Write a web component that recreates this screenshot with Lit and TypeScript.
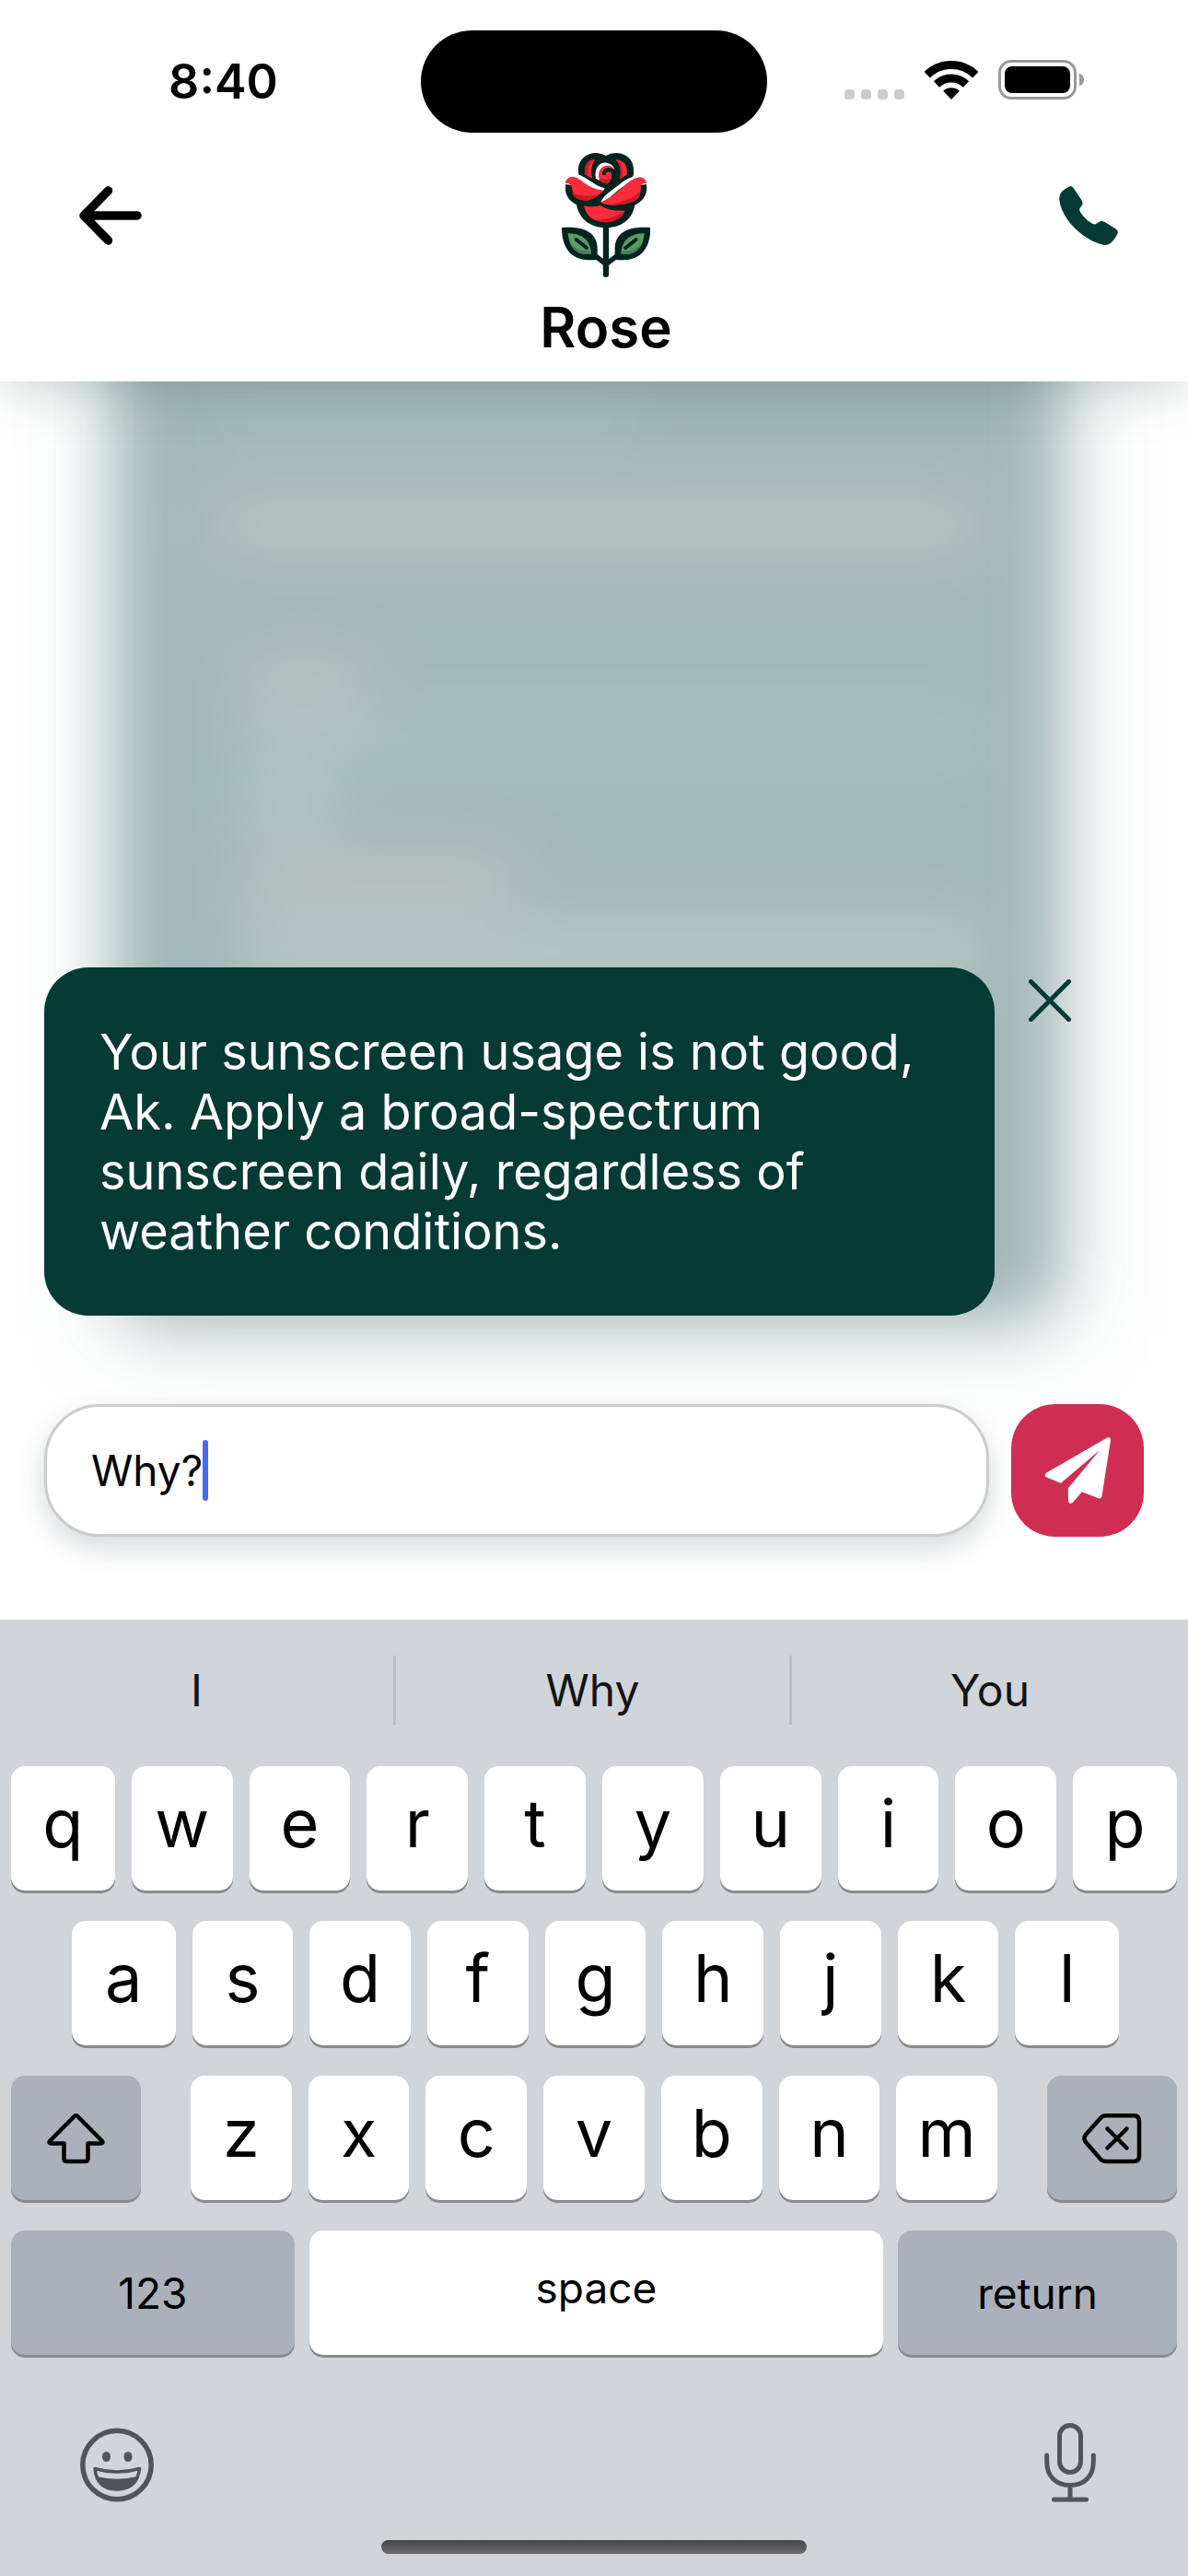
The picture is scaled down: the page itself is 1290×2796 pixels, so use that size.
import { LitElement, html, css, svg, nothing } from "lit";
import { customElement, property } from "lit/decorators.js";

const backIcon = svg`<svg width="68" height="64" viewBox="0 0 68 64" fill="none" stroke="#000" stroke-width="9.5" stroke-linecap="round" stroke-linejoin="round" aria-hidden="true">
  <path d="M31.5 5 5 32l26.500 27M5 32h58"/></svg>`;

const phoneIcon = svg`<svg width="64" height="64" viewBox="90 96 192 192" fill="#063a35" aria-hidden="true">
  <path d="M128 96Q133 97 137 102L163 141Q169 151 165 158L158 167Q155 172 158 178C168 196 184 211 200 219Q207 222 212 218L221 212Q229 208 239 213L273 234Q284 241 281 250Q274 266 261 279Q250 290 235 287C170 274 98 205 91 142Q89 125 99 114Q110 103 128 96Z"/></svg>`;

const wifiIcon = svg`<svg width="58" height="42" viewBox="0 0 58 42" aria-hidden="true">
  <g fill="none" stroke="#000" stroke-width="9">
    <path d="M2.700 15.200A37.500 37.500 0 0 1 55.300 15.200"/>
    <path d="M13 25.500A23 23 0 0 1 45 25.500"/>
  </g>
  <path d="M20.200 32.800A13 13 0 0 1 37.800 32.800L29 42Z"/></svg>`;

const batteryIcon = svg`<svg width="94" height="43" viewBox="0 0 94 43" aria-hidden="true">
  <rect x="1.500" y="1.500" width="82" height="40" rx="12.500" fill="none" stroke="#999" stroke-width="3"/>
  <rect x="7" y="7" width="71" height="29" rx="8" fill="#000"/>
  <path d="M88 14.500Q93 16.500 93 21.500T88 28.500Z" fill="#999"/></svg>`;

const leaf = svg`
  <path d="M91 291C150 287 203 298 207 355V378L235 400V420L203 396C150 402 91 385 91 291Z" fill="#04231f"/>
  <path d="M111 310C150 310 184 325 187 376C150 385 116 366 111 310Z" fill="#5a9b69"/>
  <path d="M121 346C140 366 165 368 187 368V377C160 382 135 372 121 346Z" fill="#447f57"/>
  <path d="M138 330 172 357" stroke="#04231f" stroke-width="12" stroke-linecap="round"/>`;

const roseLogo = svg`<svg width="96" height="135" viewBox="91 48 288 405" role="img" aria-label="Rose">
  ${leaf}<g transform="matrix(-1 0 0 1 471 0)">${leaf}</g>
  <path d="M235 280V443" stroke="#04231f" stroke-width="19" stroke-linecap="round"/>
  <path d="M146 119C138 72 170 48 204 48Q222 49 235 57Q250 48 268 48C308 50 330 76 325 119L300 160 236 215 170 160Z" fill="#04231f"/>
  <path d="M104 150Q96 194 139 217C148 268 190 292 236 292C282 290 320 268 329 218Q374 196 367 150L300 160 236 185 170 160Z" fill="#04231f"/>
  <path d="M163 220Q195 226 217 218Q240 238 297 236C285 262 260 274 232 274C195 272 170 255 163 220Z" fill="#ff2a3c"/>
  <path d="M203 268Q262 262 297 236C285 268 240 282 203 268Z" fill="#c81a25"/>
  <path d="M167 119C163 92 175 68 200 69C188 85 185 105 190 131Q175 124 167 119Z" fill="#ff2a3c"/>
  <path d="M177 123C174 98 182 80 197 70C170 68 163 95 167 119Z" fill="#d01b28"/>
  <path d="M266 69C295 70 306 90 303 120Q290 125 280 134C286 110 282 85 266 69Z" fill="#ff2a3c"/>
  <path d="M266 69C285 78 292 98 289 127L280 134C286 110 282 85 266 69Z" fill="#d01b28"/>
  <path d="M202 132C196 100 212 78 236 80Q256 82 263 101C250 92 232 88 222 98C212 110 213 122 216 138Z" fill="#fff"/>
  <path d="M263 103C257 89 238 85 224 94C210 104 208 124 215 138Q224 148 242 148Q256 138 255 122Z" fill="#ff2a3c"/>
  <path d="M220 128Q232 140 252 130Q250 144 242 148Q224 148 214 137Z" fill="#c81a25"/>
  <path d="M229 114C231 101 248 99 258 109Q266 128 252 146" stroke="#04231f" stroke-width="13" stroke-linecap="round" fill="none"/>
  <path d="M120 128Q137 114 152 121C185 136 198 155 231 163L226 171C190 168 160 150 120 136Z" fill="#fff"/>
  <path d="M102 146Q108 124 128 125C150 130 160 144 180 156Q202 168 227 170C215 182 200 197 172 203C140 203 125 180 122 153Q113 145 102 146Z" fill="#ff2a3c"/>
  <path d="M123 176C150 190 190 190 212 182C196 198 182 201 172 203C142 203 129 190 123 176Z" fill="#c81a25"/>
  <path d="M350 126C315 120 295 138 272 156C250 173 228 186 218 208C240 204 255 185 280 165C300 150 325 140 350 132Z" fill="#fff"/>
  <path d="M368 147Q362 127 345 127C315 131 295 156 268 178Q245 198 218 209C230 219 290 224 330 204C345 195 350 175 348 153Q358 145 368 147Z" fill="#ff2a3c"/>
  <path d="M255 217Q320 202 347 172C345 193 334 204 310 211Q275 220 255 217Z" fill="#c81a25"/></svg>`;

const closeIcon = svg`<svg width="46" height="46" viewBox="0 0 46 46" stroke="#063a35" stroke-width="5" stroke-linecap="round" aria-hidden="true">
  <path d="M2.500 2.500l41 41M43.500 2.500l-41 41"/></svg>`;

const sendIcon = svg`<svg width="73" height="74" viewBox="190 178 220 222" fill="#fff" aria-hidden="true">
  <path d="M397 181Q408 179 407 190L378 375Q376 383 367 380L313 359L284 393Q279 399 271 395Q268 392 268 387V347L372 222L247 328Q244 331 240 329L196 311Q188 304 196 297Z"/></svg>`;

const shiftIcon = svg`<svg width="64" height="56" viewBox="0 0 64 56" fill="none" stroke="#000" stroke-width="4.500" stroke-linejoin="round" aria-hidden="true">
  <path d="M29.800 4L3 31Q1.500 33.500 5 33.500H18.500V50Q18.500 53 21.500 53H41.500Q44.500 53 44.500 50V33.500H58Q61.500 33.500 60 31L33.200 4Q31.500 2.500 29.800 4Z"/></svg>`;

const deleteIcon = svg`<svg width="66" height="56" viewBox="0 0 66 56" fill="none" stroke="#000" stroke-width="4.500" stroke-linecap="round" stroke-linejoin="round" aria-hidden="true">
  <path d="M26 3.300H56Q62 3.300 62 9.500V47Q62 53 56 53H26Q22.500 53 20 50.500L3.500 31.500Q1.500 28 3.500 24.500L20 6Q22.500 3.300 26 3.300Z"/>
  <path d="M27.500 17.500l21 21M48.500 17.500l-21 21"/></svg>`;

const emojiIcon = svg`<svg width="80" height="81" viewBox="0 0 80 81" fill="#50555a" aria-hidden="true">
  <circle cx="40" cy="40.500" r="37.200" fill="none" stroke="#50555a" stroke-width="5.500"/>
  <ellipse cx="28.500" cy="31.500" rx="4.500" ry="5.500"/><ellipse cx="52" cy="31.500" rx="4.500" ry="5.500"/>
  <path d="M16 44.500Q40 51.500 64.500 44.500Q62 66.500 40 67Q18 66.500 16 44.500Z" fill="none" stroke="#50555a" stroke-width="3.500" stroke-linejoin="round"/>
  <path d="M18.500 53Q40 58.500 61.500 53Q57 67 40 67Q23 67 18.500 53Z"/></svg>`;

const micIcon = svg`<svg width="56" height="86" viewBox="0 0 56 86" fill="none" stroke="#50555a" stroke-width="5" stroke-linecap="round" aria-hidden="true">
  <rect x="16.500" y="2.500" width="23" height="51" rx="11.500"/>
  <path d="M2.700 35V42C2.700 58 13 67.500 28 67.500S53.300 58 53.300 42V35M28 67.500V83M10.500 83H45.500"/></svg>`;

const font = css`
  :host {
    font-family: Inter, "Liberation Sans", sans-serif;
  }
  * {
    box-sizing: border-box;
  }
  svg {
    display: block;
  }
  button {
    margin: 0;
    padding: 0;
    border: 0;
    background: none;
    color: inherit;
    font: inherit;
  }
`;

@customElement("chat-header")
export class ChatHeader extends LitElement {
  static styles = [
    font,
    css`
      :host {
        display: block;
        position: relative;
        z-index: 2;
        background: #fff;
        color: #000;
        box-shadow: 0 0 60px rgba(6, 58, 53, 0.27);
      }
      .status {
        display: grid;
        grid-template-columns: 1fr auto 1fr;
        align-items: center;
        padding: 33px 0 22px;
      }
      .time {
        padding-left: 28px;
        text-align: center;
        font-size: 52px;
        line-height: 64px;
        font-weight: 600;
      }
      .island {
        width: 376px;
        height: 111px;
        border-radius: 56px;
        background: #000;
      }
      .indicators {
        display: flex;
        align-items: flex-end;
        justify-content: center;
        gap: 22px;
        padding: 0 28px 4px 0;
      }
      .signal {
        display: flex;
        gap: 7px;
      }
      .dot {
        width: 11px;
        height: 11px;
        border-radius: 4px;
        background: #ccc;
      }
      .bar {
        display: grid;
        grid-template-columns: 80px 1fr 64px;
        align-items: center;
        padding: 0 76px 23px 86px;
      }
      .logo {
        justify-self: center;
      }
      .name {
        grid-column: 2;
        margin: 18px 0 0;
        text-align: center;
        font-size: 60px;
        line-height: 72px;
        font-weight: 600;
      }
    `,
  ];

  @property() name = "";
  @property() time = "";

  render() {
    return html`
      <div class="status">
        <div class="time">${this.time}</div>
        <div class="island"></div>
        <div class="indicators">
          <div class="signal">${[0, 1, 2, 3].map(() => html`<span class="dot"></span>`)}</div>
          ${wifiIcon}${batteryIcon}
        </div>
      </div>
      <div class="bar">
        <button aria-label="Back">${backIcon}</button>
        <div class="logo">${roseLogo}</div>
        <button aria-label="Call">${phoneIcon}</button>
        <h1 class="name">${this.name}</h1>
      </div>
    `;
  }
}

@customElement("soft-keyboard")
export class SoftKeyboard extends LitElement {
  static styles = [
    font,
    css`
      :host {
        display: block;
        padding-top: 39px;
        background: #d1d4d9;
        color: #000;
      }
      .suggestions {
        display: grid;
        grid-template-columns: repeat(3, 1fr);
        margin-bottom: 45px;
      }
      .suggestion {
        height: 75px;
        color: #141414;
        font-size: 48px;
        line-height: 75px;
      }
      .suggestion:not(:last-child) {
        border-right: 3px solid #babdc2;
      }
      .rows {
        display: flex;
        flex-direction: column;
        gap: 33px;
        padding: 0 12px;
      }
      .row {
        display: grid;
        gap: 18px;
      }
      .top {
        grid-template-columns: 113fr repeat(8, 110fr) 113fr;
      }
      .middle {
        grid-template-columns: 113fr repeat(7, 110fr) 113fr;
        padding: 0 63px 0 66px;
      }
      .lower {
        grid-template-columns: 141fr 876fr 141fr;
        gap: 54px;
      }
      .letters {
        grid-template-columns: repeat(7, 1fr);
      }
      .bottom {
        grid-template-columns: 308fr 624fr 303fr;
        gap: 16px;
      }
      .key {
        display: flex;
        align-items: center;
        justify-content: center;
        height: 135px;
        padding-bottom: 12px;
        border-radius: 15px;
        background: #fff;
        box-shadow: 0 3px 0 #898a8d;
        font-size: 72px;
        line-height: 72px;
      }
      .word {
        font-size: 46px;
      }
      .dark {
        padding-bottom: 0;
        background: #abb1bb;
      }
      .tools {
        display: flex;
        align-items: flex-end;
        justify-content: space-between;
        padding: 74px 100px 41px 87px;
      }
      .home {
        width: 462px;
        height: 15px;
        margin: 0 auto;
        border-radius: 8px;
        background: linear-gradient(#434547, #6c6c6e);
      }
      .end {
        height: 24px;
      }
    `,
  ];

  private key(label: string, kind = "") {
    return html`<button class="key ${kind}">${label}</button>`;
  }

  private letters(text: string) {
    return [...text].map((c) => this.key(c));
  }

  render() {
    return html`
      <div class="suggestions">
        ${["I", "Why", "You"].map((s) => html`<button class="suggestion">${s}</button>`)}
      </div>
      <div class="rows">
        <div class="row top">${this.letters("qwertyuiop")}</div>
        <div class="row middle">${this.letters("asdfghjkl")}</div>
        <div class="row lower">
          <button class="key dark" aria-label="Shift">${shiftIcon}</button>
          <div class="row letters">${this.letters("zxcvbnm")}</div>
          <button class="key dark" aria-label="Delete">${deleteIcon}</button>
        </div>
        <div class="row bottom">
          ${this.key("123", "word dark")}${this.key("space", "word")}${this.key("return", "word dark")}
        </div>
      </div>
      <div class="tools">
        <button aria-label="Emoji">${emojiIcon}</button>
        <button aria-label="Dictation">${micIcon}</button>
      </div>
      <div class="home"></div>
      <div class="end"></div>
    `;
  }
}

@customElement("app-root")
export class AppRoot extends LitElement {
  static styles = [
    font,
    css`
      :host {
        display: flex;
        flex-direction: column;
        min-height: 100vh;
        background: #fff;
      }
      .chat {
        position: relative;
        flex: 1;
        display: flex;
        flex-direction: column;
        justify-content: flex-end;
        gap: 96px;
        padding: 48px 48px 90px;
        overflow: hidden;
      }
      /* Earlier messages, out of focus behind the quoted tip. */
      .history {
        position: absolute;
        inset: -120px 0 330px;
        padding: 0 144px 0 130px;
        filter: blur(32px);
      }
      .glow {
        position: absolute;
        inset: -120px 130px 310px 120px;
        background: rgba(6, 58, 53, 0.16);
        filter: blur(52px);
      }
      .past {
        display: flex;
        flex-direction: column;
        height: 100%;
        padding: 130px 80px 0 100px;
        border-radius: 48px;
        background: #a2b8b6;
      }
      .line {
        flex: none;
        height: 48px;
        border-radius: 24px;
        background: #adc4c3;
        filter: blur(8px);
      }
      .rosy {
        height: 60px;
        background: #c0c1c2;
      }
      .intro {
        width: 56%;
        margin-bottom: 68px;
        background: #a8beba;
      }
      .lead {
        margin-bottom: 110px;
      }
      .head {
        width: 140px;
        margin: 0 0 8px 30px;
      }
      .body {
        margin: 0 0 12px 30px;
      }
      .short {
        width: 110px;
        height: 60px;
        margin: 0 0 28px 30px;
        background: #b4c9c7;
      }
      .title {
        width: 300px;
        margin: 0 0 12px 30px;
      }
      .last {
        height: 72px;
        background: #b7c8c7;
      }
      .tip {
        position: relative;
        display: flex;
        align-items: flex-start;
        gap: 24px;
        margin-right: 66px;
      }
      .quote {
        flex: 1;
        margin: 0;
        padding: 59px 60px;
        border-radius: 48px;
        background: #063a35;
        color: #fff;
        font-size: 54px;
        line-height: 65px;
      }
      .close {
        padding: 13px;
      }
      .composer {
        position: relative;
        display: flex;
        gap: 24px;
      }
      .field {
        flex: 1;
        display: flex;
        align-items: center;
        height: 144px;
        padding: 0 48px;
        border: 3px solid #ccc;
        border-radius: 60px;
        background: #fff;
        box-shadow: 0 12px 30px rgba(6, 58, 53, 0.18);
      }
      .input {
        field-sizing: content;
        padding: 0;
        border: 0;
        outline: 0;
        background: none;
        color: #000;
        font: inherit;
        font-size: 46px;
        line-height: 64px;
      }
      .caret {
        width: 6px;
        height: 66px;
        border-radius: 3px;
        background: #456bee;
      }
      .send {
        display: grid;
        place-items: center;
        width: 144px;
        height: 144px;
        border-radius: 48px;
        background: #cf2e52;
      }
    `,
  ];

  @property() draft = "Why?";

  render() {
    return html`
      <chat-header name="Rose" time="8:40"></chat-header>
      <main class="chat">
        <div class="glow"></div>
        <div class="history" aria-hidden="true">
          <div class="past">
            <div class="line intro"></div>
            <div class="line rosy lead"></div>
            <div class="line rosy head"></div>
            <div class="line body"></div>
            <div class="line short"></div>
            <div class="line rosy title"></div>
            <div class="line body last"></div>
          </div>
        </div>
        <div class="tip">
          <p class="quote">
            Your sunscreen usage is not good, Ak. Apply a broad-spectrum sunscreen daily, regardless of weather
            conditions.
          </p>
          <button class="close" aria-label="Dismiss">${closeIcon}</button>
        </div>
        <div class="composer">
          <label class="field">
            <input class="input" size="4" aria-label="Message" .value=${this.draft} />
            ${this.draft ? html`<span class="caret"></span>` : nothing}
          </label>
          <button class="send" aria-label="Send">${sendIcon}</button>
        </div>
      </main>
      <soft-keyboard></soft-keyboard>
    `;
  }
}
